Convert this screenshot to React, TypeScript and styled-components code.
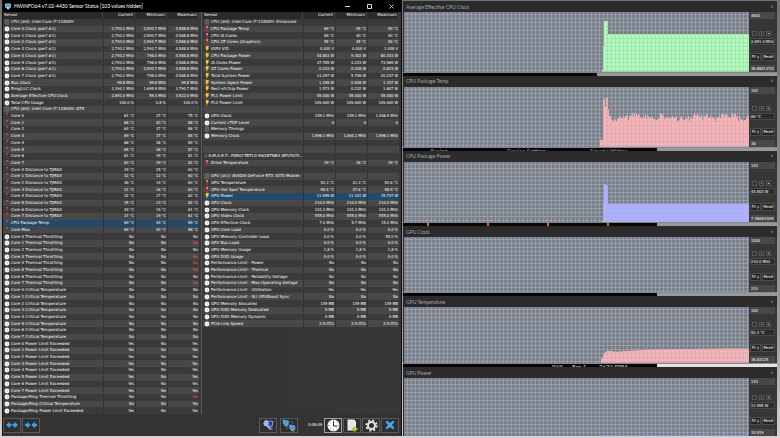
import React from "react";
import styled, { createGlobalStyle } from "styled-components";

const GlobalStyle = createGlobalStyle`
  * { box-sizing: border-box; }
  body {
    margin: 0;
    background: #8b8d91;
    font-family: "DejaVu Sans", "Open Sans", "Noto Sans", sans-serif;
    font-size: 4px;
    line-height: 6px;
    color: #fff;
  }
  button, input { font: inherit; color: inherit; }
`;

const titleFont = `Lato, "Open Sans", sans-serif`;
const narrowFont = `"DejaVu Sans Condensed", "Open Sans", sans-serif`;

type Icon = "clock" | "temp" | "hot" | "bolt" | "chip" | "none";
type Row = {
  icon: Icon;
  name: string;
  values?: string[];
  group?: boolean;
  selected?: boolean;
};

const group = (name: string): Row => ({ icon: "chip", name, group: true });
const row = (icon: Icon, name: string, values: string): Row => ({ icon, name, values: values.split(" ") });
const unit = (icon: Icon, name: string, values: string, u: string): Row => ({
  icon,
  name,
  values: values.split(" ").map((v) => `${v} ${u}`),
});
const blank: Row = { icon: "none", name: "" };
const cores = [0, 1, 2, 3, 4, 5, 6, 7];

const clockMinimums = ["2,593.7", "2,593.7", "2,593.7", "2,593.7", "798.0", "798.0", "2,593.7", "798.0"];
const coreTemps = ["61 37 75", "68 40 88", "64 37 86", "69 37 84", "68 38 83", "65 38 87", "61 39 81", "63 39 81"];
const distances = ["39 25 63", "32 12 60", "36 14 63", "31 16 63", "32 17 62", "35 13 62", "39 19 61", "37 19 61"];
const throttled = ["No", "Yes", "No", "Yes", "Yes", "Yes", "No", "Yes"];

const cpuRows: Row[] = [
  group("CPU [#0]: Intel Core i7-11800H"),
  ...cores.map((c) => unit("clock", `Core ${c} Clock (perf #1)`, `2,793.2 ${clockMinimums[c]} 4,588.8`, "MHz")),
  unit("clock", "Bus Clock", "99.8 99.8 99.8", "MHz"),
  unit("clock", "Ring/LLC Clock", "2,394.1 1,695.9 3,790.7", "MHz"),
  unit("clock", "Average Effective CPU Clock", "2,891.0 59.3 3,922.0", "MHz"),
  unit("clock", "Total CPU Usage", "100.0 0.8 100.0", "%"),
  group("CPU [#0]: Intel Core i7-11800H: DTS"),
  ...cores.map((c) => unit("temp", `Core ${c}`, coreTemps[c], "°C")),
  ...cores.map((c) => unit("temp", `Core ${c} Distance to TjMAX`, distances[c], "°C")),
  { ...unit("temp", "CPU Package Temp", "69 44 89", "°C"), selected: true },
  unit("temp", "Core Max", "69 40 88", "°C"),
  ...cores.map((c) => row("clock", `Core ${c} Thermal Throttling`, `No No ${throttled[c]}`)),
  ...cores.map((c) => row("clock", `Core ${c} Critical Temperature`, "No No No")),
  ...cores.map((c) => row("clock", `Core ${c} Power Limit Exceeded`, "Yes No Yes")),
  row("clock", "Package/Ring Thermal Throttling", "No No Yes"),
  row("clock", "Package/Ring Critical Temperature", "No No No"),
  row("clock", "Package/Ring Power Limit Exceeded", "Yes No Yes"),
];

const systemRows: Row[] = [
  group("CPU [#0]: Intel Core i7-11800H: Enhanced"),
  unit("hot", "CPU Package Temp", "69 45 90", "°C"),
  unit("hot", "CPU IA Cores", "69 40 90", "°C"),
  unit("hot", "CPU GT Cores (Graphics)", "55 45 90", "°C"),
  unit("bolt", "iGPU VID", "0.000 0.000 1.048", "V"),
  unit("bolt", "CPU Package Power", "44.803 9.302 80.333", "W"),
  unit("bolt", "IA Cores Power", "37.765 4.233 73.569", "W"),
  unit("bolt", "GT Cores Power", "0.233 0.038 0.823", "W"),
  unit("bolt", "Total System Power", "13.297 5.746 20.237", "W"),
  unit("bolt", "System Agent Power", "1.298 0.848 1.337", "W"),
  unit("bolt", "Rest-of-Chip Power", "1.573 0.232 1.607", "W"),
  unit("bolt", "PL1 Power Limit", "45.000 45.000 45.000", "W"),
  unit("bolt", "PL2 Power Limit", "109.000 109.000 109.000", "W"),
  blank,
  unit("clock", "GPU Clock", "349.1 349.1 1,446.5", "MHz"),
  row("clock", "Current cTDP Level", "0 0 0"),
  group("Memory Timings"),
  unit("clock", "Memory Clock", "1,596.1 1,064.1 1,596.1", "MHz"),
  blank,
  blank,
  group("S.M.A.R.T.: ESR01TBTLG-E6GBTNB4 (BF2507I..."),
  unit("hot", "Drive Temperature", "39 36 39", "°C"),
  blank,
  group("GPU [#1]: NVIDIA GeForce RTX 3070 Mobile:"),
  unit("hot", "GPU Temperature", "52.3 41.3 52.6", "°C"),
  unit("hot", "GPU Hot Spot Temperature", "58.4 47.6 58.9", "°C"),
  { ...unit("bolt", "GPU Power", "11.995 11.101 15.737", "W"), selected: true },
  unit("clock", "GPU Clock", "210.0 210.0 210.0", "MHz"),
  unit("clock", "GPU Memory Clock", "101.3 101.3 101.3", "MHz"),
  unit("clock", "GPU Video Clock", "555.0 555.0 555.0", "MHz"),
  unit("clock", "GPU Effective Clock", "7.4 5.7 15.2", "MHz"),
  unit("clock", "GPU Core Load", "0.0 0.0 0.0", "%"),
  unit("clock", "GPU Memory Controller Load", "0.0 0.0 55.0", "%"),
  unit("clock", "GPU Bus Load", "0.0 0.0 0.0", "%"),
  unit("clock", "GPU Memory Usage", "1.8 1.8 1.8", "%"),
  unit("clock", "GPU D3D Usage", "0.0 0.0 0.0", "%"),
  row("clock", "Performance Limit - Power", "No No No"),
  row("clock", "Performance Limit - Thermal", "No No No"),
  row("clock", "Performance Limit - Reliability Voltage", "No No No"),
  row("clock", "Performance Limit - Max Operating Voltage", "No No No"),
  row("clock", "Performance Limit - Utilization", "Yes Yes Yes"),
  row("clock", "Performance Limit - SLI GPUBoost Sync", "No No No"),
  unit("clock", "GPU Memory Allocated", "149 149 149", "MB"),
  unit("clock", "GPU D3D Memory Dedicated", "5 5 5", "MB"),
  unit("clock", "GPU D3D Memory Dynamic", "0 0 0", "MB"),
  unit("clock", "PCIe Link Speed", "2.5 2.5 2.5", "GT/s"),
];

const ROW_SLOTS = 59;

/* ---------- shell ---------- */

const Desktop = styled.div`
  display: grid;
  grid-template-columns: minmax(0, 400fr) minmax(0, 374fr);
  column-gap: 1px;
  min-height: 100vh;
  padding: 0 3px 2px 2px;
  background: linear-gradient(#707275, #9a9c9f 75%, #d6d2d2);
  overflow: hidden;
`;

const SensorWindow = styled.main`
  display: flex;
  flex-direction: column;
  background: #363636;
  border: solid #101010;
  border-width: 0 1px;
`;

const TitleBar = styled.header`
  display: flex;
  align-items: center;
  gap: 3px;
  height: 12px;
  padding-left: 2px;
  background: #000;
`;

const WindowTitle = styled.h1`
  flex: 1;
  margin: 0;
  font-family: ${titleFont};
  font-size: 5px;
  font-weight: 400;
  white-space: nowrap;
`;

const WindowButton = styled.button`
  display: flex;
  align-items: center;
  justify-content: center;
  width: 19px;
  height: 12px;
  padding: 0;
  border: 0;
  background: none;
`;

const Tables = styled.div`
  flex: 1;
  display: grid;
  grid-template-columns: minmax(0, 1fr) minmax(0, 1fr);
`;

/* ---------- sensor table ---------- */

const SensorTable = styled.table`
  display: flex;
  flex-direction: column;
  height: 100%;
  padding-right: 2px;
  border-right: 1px solid #5c6064;
  background: linear-gradient(90deg, #343434, #373737);
  &:last-child { border-right: 0; padding-left: 1px; }
`;

const TableHead = styled.thead`
  display: block;
  background: #2a2a2a;
`;

const TableBody = styled.tbody<{ $slots: number }>`
  flex: 1;
  display: grid;
  grid-template-rows: repeat(${(p) => p.$slots}, minmax(0, 1fr));
`;

const TableRow = styled.tr<{ $tone?: "even" | "odd" | "selected" | "empty" }>`
  display: grid;
  grid-template-columns: minmax(0, 100fr) minmax(0, 32fr) minmax(0, 32fr) minmax(0, 32fr);
  align-items: center;
  min-height: 0;
  background: ${(p) =>
    p.$tone === "selected" ? "#254a69" : p.$tone === "odd" ? "#484848" : p.$tone === "even" ? "#3a3a3a" : "transparent"};
`;

const HeadCell = styled.th<{ $start?: boolean }>`
  height: 7px;
  padding: 0 1px;
  font-weight: 400;
  line-height: 6px;
  text-align: ${(p) => (p.$start ? "left" : "right")};
  border-right: 1px solid #454545;
`;

const NameCell = styled.th<{ $group?: boolean }>`
  display: flex;
  align-items: center;
  gap: 1px;
  height: 100%;
  padding: 0 0 0 1px;
  font-weight: 400;
  font-style: ${(p) => (p.$group ? "italic" : "normal")};
  text-align: left;
  white-space: nowrap;
`;

const ValueCell = styled.td<{ $alert?: boolean }>`
  display: flex;
  align-items: center;
  justify-content: flex-end;
  height: 100%;
  padding: 0 1px 0 0;
  border-left: 1px solid #343434;
  color: ${(p) => (p.$alert ? "#ff4c4c" : "inherit")};
  font-family: ${narrowFont};
  white-space: nowrap;
`;

function SensorIcon({ kind }: { kind: Icon }) {
  return (
    <svg width="6" height="6" viewBox="0 0 12 12" aria-hidden="true">
      {kind === "clock" && (
        <>
          <circle cx="6" cy="6" r="4.8" fill="#f8f8f8" />
          <path d="M6 4V6.5H8" stroke="#999" strokeWidth="1" fill="none" />
        </>
      )}
      {kind === "temp" && (
        <>
          <path d="M5 1H8V2.5H6.5V11H4.5Z" fill="#b5201f" />
          <path d="M5 1H8V2.5H5Z" fill="#b99" />
        </>
      )}
      {kind === "hot" && (
        <>
          <path d="M5 0.5H7.5V11.5H5Z" fill="#e8201c" />
          <path d="M5 0.5H7.5V3.5H5Z" fill="#f3dcdc" />
        </>
      )}
      {kind === "bolt" && <path d="M4 0H10L8.5 4H10L4.5 12L5.5 6.5H3Z" fill="#f7c02c" />}
      {kind === "chip" && <path d="M3 1H9L10 2V10L9 11H3L2 10V2Z" fill="#5d5d5d" stroke="#6c6c6c" />}
    </svg>
  );
}

function Sensors({ rows, label }: { rows: Row[]; label: string }) {
  return (
    <SensorTable aria-label={label}>
      <TableHead>
        <TableRow>
          <HeadCell $start scope="col">Sensor</HeadCell>
          <HeadCell scope="col">Current</HeadCell>
          <HeadCell scope="col">Minimum</HeadCell>
          <HeadCell scope="col">Maximum</HeadCell>
        </TableRow>
      </TableHead>
      <TableBody $slots={ROW_SLOTS}>
        {rows.map((r, i) => (
          <TableRow key={i} $tone={r.selected ? "selected" : i % 2 ? "odd" : "even"}>
            <NameCell scope="row" $group={r.group}>
              <SensorIcon kind={r.icon} />
              {r.name}
            </NameCell>
            {[0, 1, 2].map((c) => (
              <ValueCell key={c} $alert={c === 2 && r.name.includes("Throttling") && r.values?.[c] === "Yes"}>
                {r.values?.[c]}
              </ValueCell>
            ))}
          </TableRow>
        ))}
        {Array.from({ length: ROW_SLOTS - rows.length }, (_, i) => (
          <TableRow key={`empty-${i}`} $tone="empty" aria-hidden="true">
            <td />
            <ValueCell />
            <ValueCell />
            <ValueCell />
          </TableRow>
        ))}
      </TableBody>
    </SensorTable>
  );
}

/* ---------- toolbar ---------- */

const Toolbar = styled.footer`
  display: flex;
  align-items: center;
  gap: 1px;
  height: 22px;
  padding-right: 2px;
  background: #333;
`;

const ToolButton = styled.button<{ $active?: boolean }>`
  display: flex;
  align-items: center;
  justify-content: center;
  width: 18px;
  height: 15px;
  padding: 0;
  background: #2f2f2f;
  border: 1px solid ${(p) => (p.$active ? "#a0a0a0" : "#5a5a5a")};
`;

const Push = styled.div`
  flex: 1;
`;

const ToolPair = styled.div`
  display: flex;
  gap: 3px;
  margin-right: 9px;
`;

const Elapsed = styled.time`
  margin-right: 1px;
  font-family: ${narrowFont};
`;

const ArrowsApart = () => (
  <svg width="14" height="8" viewBox="0 0 14 8" aria-hidden="true">
    <path d="M1 4L4.5 0.8V2.8H6.5V5.2H4.5V7.2ZM13 4L9.5 0.8V2.8H7.5V5.2H9.5V7.2Z" fill="#3fa2ee" />
  </svg>
);
const ArrowsTogether = () => (
  <svg width="14" height="8" viewBox="0 0 14 8" aria-hidden="true">
    <path d="M6.7 4L3.2 0.8V2.8H1V5.2H3.2V7.2ZM7.3 4L10.8 0.8V2.8H13V5.2H10.8V7.2Z" fill="#3fa2ee" />
  </svg>
);
const ScreenSearch = () => (
  <svg width="12" height="12" viewBox="0 0 24 24" aria-hidden="true">
    <path d="M6 3L22 5L20 16L8 14Z" fill="#2d5be0" stroke="#dfe7ff" strokeWidth="1" />
    <path d="M14 5L20 6L18 14Z" fill="#1130a0" />
    <circle cx="8" cy="9" r="4.5" fill="#8eb6f5" stroke="#eef" strokeWidth="1" />
    <path d="M11 14L16 20" stroke="#d8d8d8" strokeWidth="2.5" fill="none" />
    <path d="M14 20H21" stroke="#bbb" strokeWidth="2" />
  </svg>
);
const Network = () => (
  <svg width="14" height="13" viewBox="0 0 28 26" aria-hidden="true">
    <path d="M15 6H21V11M8 15V19H13" stroke="#777" strokeWidth="1" fill="none" />
    <path d="M2 2L13 4L12 12L3 10Z" fill="#3d9df0" stroke="#9fd2fa" strokeWidth="1" />
    <path d="M5 12L11 13L12 15L5 14Z" fill="#bbb" />
    <path d="M15 12L26 14L25 22L16 20Z" fill="#3d9df0" stroke="#9fd2fa" strokeWidth="1" />
    <path d="M18 22L24 23L25 25L18 24Z" fill="#bbb" />
  </svg>
);
const ClockFace = () => (
  <svg width="13" height="13" viewBox="0 0 26 26" aria-hidden="true">
    <circle cx="13" cy="13" r="12" fill="#fff" />
    <path d="M13 2V5M13 21V24M2 13H5M21 13H24M5.2 5.2L7 7M19 19L20.8 20.8M5.2 20.8L7 19M19 7L20.8 5.2" stroke="#555" strokeWidth="1.4" />
    <path d="M13 5V14H20" stroke="#222" strokeWidth="2" fill="none" />
  </svg>
);
const NewReport = () => (
  <svg width="12" height="13" viewBox="0 0 24 26" aria-hidden="true">
    <path d="M3 1H16L20 5V23H3Z" fill="#ededed" />
    <path d="M6 6H16M6 10H17M6 14H17M6 18H14" stroke="#c9c9c9" strokeWidth="1" />
    <path d="M15 15H19V18H23V22H19V25H15V22H12V18H15Z" fill="#9bd442" />
  </svg>
);
const Gear = () => (
  <svg width="13" height="13" viewBox="0 0 26 26" aria-hidden="true">
    <circle cx="13" cy="13" r="7" fill="none" stroke="#e4e8ea" strokeWidth="4" />
    <circle cx="13" cy="13" r="10.5" fill="none" stroke="#e4e8ea" strokeWidth="3.5" strokeDasharray="4.2 4.05" />
  </svg>
);
const Cross = () => (
  <svg width="12" height="12" viewBox="0 0 24 24" aria-hidden="true">
    <path d="M3 6L6 3L12 8L18 3L21 6L16 12L21 18L18 21L12 16L6 21L3 18L8 12Z" fill="#3fa9ea" />
  </svg>
);

/* ---------- graph windows ---------- */

const GraphColumn = styled.section`
  display: flex;
  flex-direction: column;
  padding-top: 1px;
  min-width: 0;
`;

const GraphWindow = styled.article<{ $weight: number }>`
  flex: ${(p) => p.$weight} 1 0;
  display: flex;
  flex-direction: column;
  min-height: 0;
  background: #2b2b2b;
`;

const GraphTitle = styled.header`
  display: flex;
  align-items: center;
  justify-content: space-between;
  height: 11px;
  padding: 0 3px;
  color: #a8a8a8;
`;

const GraphName = styled.h2`
  margin: 0;
  font-family: ${titleFont};
  font-size: 5px;
  font-weight: 400;
  white-space: nowrap;
`;

const GraphClose = styled.button`
  width: 4px;
  height: 6px;
  padding: 0;
  border: 0;
  background: none;
  line-height: 4px;
`;

const GraphBody = styled.div`
  flex: 1;
  display: flex;
  min-height: 0;
`;

const gridLines = `
  background-image:
    linear-gradient(90deg, rgba(150, 176, 214, 0.35) 1px, transparent 1px),
    linear-gradient(rgba(150, 176, 214, 0.35) 1px, transparent 1px);
  background-size: 4px 4px;
  background-position: 3px 2px;
`;

const Plot = styled.div`
  flex: 1;
  display: grid;
  min-width: 0;
  margin-left: 1px;
  background-color: #7f7f7f;
  ${gridLines}
  > * { grid-area: 1 / 1; }
`;

const Trace = styled.svg`
  display: block;
  width: 100%;
  height: 100%;
  min-height: 0;
`;

const GridOverlay = styled.div`
  z-index: 1;
  ${gridLines}
`;

const Side = styled.div`
  display: flex;
  flex-direction: column;
  width: 28px;
  padding: 0 2px 0 1px;
  background: #363636;
  font-family: ${narrowFont};
`;

const Field = styled.input<{ $outlined?: boolean }>`
  width: 100%;
  height: 7px;
  margin: 0 0 ${(p) => (p.$outlined ? 8 : 0)}px;
  padding: ${(p) => (p.$outlined ? 0 : "0 1px")};
  border: ${(p) => (p.$outlined ? "1px solid #474747" : "0")};
  background: ${(p) => (p.$outlined ? "#2c2c2c" : "#484848")};
  line-height: 5px;
`;

const Swatches = styled.div`
  display: flex;
  gap: 2px;
  margin-top: auto;
  margin-bottom: 2px;
  padding-left: 2px;
`;

const Swatch = styled.button<{ $dot: string }>`
  width: 5px;
  height: 5px;
  padding: 1px;
  border: 1px solid #555;
  background: ${(p) => p.$dot} content-box;
`;

const FitRow = styled.div`
  display: flex;
  gap: 1px;
  margin-bottom: 4px;
`;

const FitButton = styled.button<{ $grow?: boolean }>`
  flex: ${(p) => (p.$grow ? "1" : "0 0 11px")};
  height: 8px;
  padding: 0;
  border: 1px solid #4c4c4c;
  background: #242424;
  line-height: 6px;
  white-space: nowrap;
`;

const Gap = styled.div<{ $split: string; $light: string }>`
  display: flex;
  align-items: flex-start;
  height: 4px;
  overflow: hidden;
  background: linear-gradient(90deg, #050505 ${(p) => p.$split}, ${(p) => p.$light} ${(p) => p.$split});
  border-top: 1px solid #85878a;
`;

const Peek = styled.span<{ $basis: string; $bright?: boolean }>`
  display: flex;
  justify-content: flex-end;
  flex: 0 0 ${(p) => p.$basis};
  min-width: 0;
  font-family: ${titleFont};
  font-size: 6px;
  line-height: 5px;
  color: ${(p) => (p.$bright ? "#ddd" : "#999")};
  white-space: nowrap;
`;

const Spark = styled.i`
  flex: 0 0 16%;
  height: 3px;
  background: linear-gradient(#f2661c, #f2661c) right / 2px 3px no-repeat;
  &:first-child { flex-basis: 7%; }
`;

const jagged = [3, 5, 1, 6, 4, 8, 2, 5, 0, 4, 7, 3, 6, 2, 5, 1, 4, 6, 3, 7, 5, 2, 4, 1, 6, 0, 3, 5, 8, 2, 4];
const tempTrace = (() => {
  let d = "M196 60V53H199V12H201V20H202V11H204V22H205V29H207";
  for (let x = 207, i = 0; x < 345; x += 1, i += 1) {
    const wave = Math.sin(i / 5) * 2;
    const y = x < 214 ? 32 + (i % 3) : 27 + wave * 0.7 + jagged[(i * 7 + (i >> 3)) % jagged.length] * 0.8;
    d += `V${y.toFixed(1)}H${x + 1}`;
  }
  return `${d}V60Z`;
})();

type Graph = {
  name: string;
  weight: number;
  high: string;
  now: string;
  low: string;
  color: string;
  path: string;
  split?: string;
  light?: string;
};

const graphs: Graph[] = [
  { name: "Average Effective CPU Clock", weight: 71, high: "4600", now: "2,891.0 MHz", low: "36.88413720", color: "#b0ffb0", path: "M198 60V58H199V34H200V9H204V22H345V60Z", split: "52%", light: "#98999b" },
  { name: "CPU Package Temp", weight: 71, high: "100", now: "69 °C", low: "38", color: "#ffb0b0", path: tempTrace, split: "68%", light: "#98999b" },
  { name: "CPU Package Power", weight: 72, high: "120", now: "44.803 W", low: "7.486543093", color: "#b0b0ff", path: "M196 60L198 59L199 57V39H200V22H202L204 25V41H345V60Z", split: "68%", light: "#98999b" },
  { name: "GPU Clock", weight: 66, high: "1400", now: "210.0 MHz", low: "210", color: "#6d9a6d", path: "M0 59.4H345V60H0Z", split: "68%", light: "#98999b" },
  { name: "GPU Temperature", weight: 67, high: "100", now: "52.3 °C", low: "36.83125", color: "#ffb0b0", path: "M197 60V55H199V52L201 49L203 47L212 48L235 46.5L255 45.5L285 45L325 44.5H345V60Z", split: "68%", light: "#e4e4e2" },
  { name: "GPU Power", weight: 69, high: "110", now: "11.995 W", low: "10.919", color: "#8f8fe0", path: "M196 60V59.4H212V59H216V59.5H240V59H246V59.5H268V58.5H269V59.5H283V59H285V59.5H298V59H303V59.5H319V57H321V59.5H342V57H344V60Z" },
];

function GraphPanel({ graph }: { graph: Graph }) {
  return (
    <GraphWindow $weight={graph.weight}>
      <GraphTitle>
        <GraphName>{graph.name}</GraphName>
        <GraphClose aria-label={`Close ${graph.name}`}>×</GraphClose>
      </GraphTitle>
      <GraphBody>
        <Plot>
          <Trace viewBox="0 0 345 60" preserveAspectRatio="none" height="1" role="img" aria-label={`${graph.name} history`}>
            <path d={graph.path} fill={graph.color} />
          </Trace>
          <GridOverlay />
        </Plot>
        <Side>
          <Field defaultValue={graph.high} aria-label={`${graph.name} upper bound`} />
          <Swatches>
            <Swatch $dot="#222" aria-label="Background colour" />
            <Swatch $dot="#999" aria-label="Grid colour" />
            <Swatch $dot="#cfe4ff" aria-label="Line colour" />
          </Swatches>
          <Field $outlined readOnly value={graph.now} aria-label={`${graph.name} current value`} />
          <FitRow>
            <FitButton>Fit y</FitButton>
            <FitButton $grow>Reset</FitButton>
          </FitRow>
          <Field defaultValue={graph.low} aria-label={`${graph.name} lower bound`} />
        </Side>
      </GraphBody>
    </GraphWindow>
  );
}

function GapContent({ after }: { after: string }) {
  if (after === "CPU Package Temp")
    return (
      <>
        <Peek $basis="12%">Fusion</Peek>
        <Peek $basis="26%">Device Setting</Peek>
        <Peek $basis="22%">Smart Utilities</Peek>
      </>
    );
  if (after === "CPU Package Power")
    return (
      <>
        <Spark />
        <Spark />
        <Spark />
        <Spark />
      </>
    );
  if (after === "GPU Temperature")
    return (
      <>
        <Peek $bright $basis="43%">96%</Peek>
        <Peek $bright $basis="6%">Fan 1</Peek>
        <Peek $bright $basis="11%">2620 RPM</Peek>
      </>
    );
  return null;
}

export default function App() {
  return (
    <>
      <GlobalStyle />
      <Desktop>
        <SensorWindow>
          <TitleBar>
            <svg width="6" height="7" viewBox="0 0 14 14" aria-hidden="true">
              <path d="M1 1H13V9H1Z" fill="#3aa0e8" stroke="#e6f3fb" strokeWidth="1.5" />
              <path d="M5 9H9V12H12V13.5H4V12H5Z" fill="#e8e8e8" />
            </svg>
            <WindowTitle>HWiNFO64 v7.02-4430 Sensor Status [103 values hidden]</WindowTitle>
            <WindowButton aria-label="Minimize">
              <svg width="5" height="5" viewBox="0 0 5 5"><path d="M0 2.5H5" stroke="#ddd" /></svg>
            </WindowButton>
            <WindowButton aria-label="Maximize">
              <svg width="5" height="5" viewBox="0 0 5 5"><path d="M0.5 0.5H4.5V4.5H0.5Z" stroke="#ddd" fill="none" /></svg>
            </WindowButton>
            <WindowButton aria-label="Close">
              <svg width="5" height="5" viewBox="0 0 5 5"><path d="M0.5 0.5L4.5 4.5M4.5 0.5L0.5 4.5" stroke="#ddd" strokeWidth="0.8" /></svg>
            </WindowButton>
          </TitleBar>
          <Tables>
            <Sensors rows={cpuRows} label="CPU sensors" />
            <Sensors rows={systemRows} label="System and GPU sensors" />
          </Tables>
          <Toolbar>
            <ToolButton aria-label="Expand columns"><ArrowsApart /></ToolButton>
            <ToolButton aria-label="Shrink columns"><ArrowsTogether /></ToolButton>
            <Push />
            <ToolPair>
              <ToolButton aria-label="System summary"><ScreenSearch /></ToolButton>
              <ToolButton aria-label="Remote monitoring"><Network /></ToolButton>
            </ToolPair>
            <Elapsed>0:08:49</Elapsed>
            <ToolButton $active aria-label="Reset clock"><ClockFace /></ToolButton>
            <ToolButton aria-label="Start logging"><NewReport /></ToolButton>
            <ToolButton aria-label="Settings"><Gear /></ToolButton>
            <ToolButton aria-label="Close sensors"><Cross /></ToolButton>
          </Toolbar>
        </SensorWindow>
        <GraphColumn>
          {graphs.map((g) => (
            <React.Fragment key={g.name}>
              <GraphPanel graph={g} />
              {g.split && (
                <Gap $split={g.split} $light={g.light ?? "#98999b"}>
                  <GapContent after={g.name} />
                </Gap>
              )}
            </React.Fragment>
          ))}
        </GraphColumn>
      </Desktop>
    </>
  );
}
